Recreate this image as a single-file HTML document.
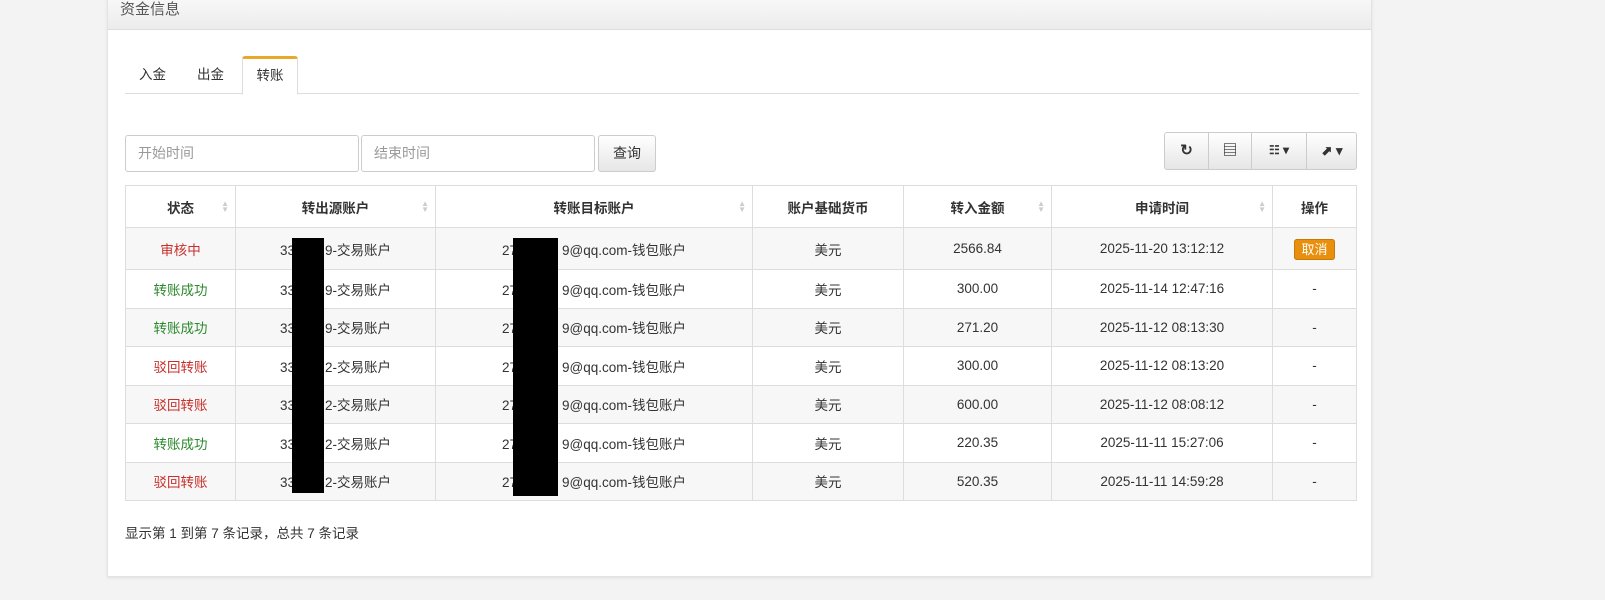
<!DOCTYPE html>
<html><head><meta charset="utf-8"><style>
*{box-sizing:border-box;margin:0;padding:0}
body{width:1605px;height:600px;overflow:hidden;background:#f3f3f3;font-family:"Liberation Sans","Noto Sans CJK SC",sans-serif;font-size:13.5px;color:#333;position:relative}
.panel{position:absolute;left:107px;top:-2px;width:1265px;height:579px;background:#fff;border:1px solid #e3e3e3;box-shadow:0 1px 3px rgba(0,0,0,.08)}
.ph{height:31px;background:linear-gradient(#f8f8f8,#ececec);border-bottom:1px solid #ddd;padding:0 12px;font-size:15px;color:#555;line-height:22px}
.tabs{position:absolute;left:17px;top:57px;width:1234px;height:38px;border-bottom:1px solid #ddd}
.tab{position:absolute;top:0;height:38px;line-height:38px;font-size:13.5px;color:#333}
.tab.act{left:117px;width:56px;background:#fff;border:1px solid #ddd;border-top:3px solid #e8a92b;border-bottom:1px solid #fff;border-radius:3px 3px 0 0;text-align:center;line-height:34px;height:39px}
.inp{position:absolute;top:136px;height:37px;border:1px solid #ccc;border-radius:3px;color:#999;font-size:14px;line-height:35px;padding-left:12px}
.btn{position:absolute;border:1px solid #ccc;border-radius:3px;background:linear-gradient(#fff,#e6e6e6);text-align:center}
table{position:absolute;left:17px;top:186px;width:1232px;border-collapse:collapse;border:1px solid #ddd;font-size:13.5px}
td,th{border:1px solid #ddd;text-align:center;height:38.5px}
th{height:42px;font-weight:bold;position:relative}
th .s{position:absolute;right:6px;top:15px;color:#ccc;font-size:8px;line-height:6px}
tr:nth-child(even) td{background:#f7f7f7}
.r{color:#c9302c}.g{color:#2d8a2d}
.cx{background:#e8900e;color:#fff;border:1px solid #c87a08;border-radius:3px;padding:2px 6px;font-size:13px}
.blk{position:absolute;background:#000}
</style></head><body>
<div class="panel">
<div class="ph">资金信息</div>
<div class="tabs">
<div class="tab" style="left:14px">入金</div>
<div class="tab" style="left:72px">出金</div>
<div class="tab act">转账</div>
</div>
<div class="inp" style="left:17px;width:234px">开始时间</div>
<div class="inp" style="left:253px;width:234px">结束时间</div>
<div class="btn" style="left:490px;top:136px;width:58px;height:37px;line-height:35px;font-size:14px">查询</div>
<div class="btn" style="left:1056px;top:133px;width:193px;height:38px;line-height:35px;font-size:15px;font-weight:bold">
<span style="position:absolute;left:0;width:43px;">&#x21bb;</span>
<span style="position:absolute;left:43px;width:43px;border-left:1px solid #ccc;height:36px">&#x25A4;</span>
<span style="position:absolute;left:86px;width:55px;border-left:1px solid #ccc;height:36px;font-size:12px">&#x2637; ▾</span>
<span style="position:absolute;left:141px;width:51px;border-left:1px solid #ccc;height:36px;font-size:13px">&#x2B08; ▾</span>
</div>
<table>
<tr><th style="width:110px">状态<span class="s">▲<br>▼</span></th><th style="width:200px">转出源账户<span class="s">▲<br>▼</span></th><th style="width:317px">转账目标账户<span class="s">▲<br>▼</span></th><th style="width:151px">账户基础货币</th><th style="width:148px">转入金额<span class="s">▲<br>▼</span></th><th style="width:221px">申请时间<span class="s">▲<br>▼</span></th><th>操作</th></tr>
<tr><td class="r" style="height:42px">审核中</td><td>33&nbsp;&nbsp;&nbsp;&nbsp;&nbsp;&nbsp;&nbsp;&nbsp;9-交易账户</td><td>272&nbsp;&nbsp;&nbsp;&nbsp;&nbsp;&nbsp;&nbsp;&nbsp;&nbsp;&nbsp;9@qq.com-钱包账户</td><td>美元</td><td>2566.84</td><td>2025-11-20 13:12:12</td><td><span class="cx">取消</span></td></tr>
<tr><td class="g">转账成功</td><td>33&nbsp;&nbsp;&nbsp;&nbsp;&nbsp;&nbsp;&nbsp;&nbsp;9-交易账户</td><td>272&nbsp;&nbsp;&nbsp;&nbsp;&nbsp;&nbsp;&nbsp;&nbsp;&nbsp;&nbsp;9@qq.com-钱包账户</td><td>美元</td><td>300.00</td><td>2025-11-14 12:47:16</td><td>-</td></tr>
<tr><td class="g">转账成功</td><td>33&nbsp;&nbsp;&nbsp;&nbsp;&nbsp;&nbsp;&nbsp;&nbsp;9-交易账户</td><td>272&nbsp;&nbsp;&nbsp;&nbsp;&nbsp;&nbsp;&nbsp;&nbsp;&nbsp;&nbsp;9@qq.com-钱包账户</td><td>美元</td><td>271.20</td><td>2025-11-12 08:13:30</td><td>-</td></tr>
<tr><td class="r">驳回转账</td><td>33&nbsp;&nbsp;&nbsp;&nbsp;&nbsp;&nbsp;&nbsp;&nbsp;2-交易账户</td><td>272&nbsp;&nbsp;&nbsp;&nbsp;&nbsp;&nbsp;&nbsp;&nbsp;&nbsp;&nbsp;9@qq.com-钱包账户</td><td>美元</td><td>300.00</td><td>2025-11-12 08:13:20</td><td>-</td></tr>
<tr><td class="r">驳回转账</td><td>33&nbsp;&nbsp;&nbsp;&nbsp;&nbsp;&nbsp;&nbsp;&nbsp;2-交易账户</td><td>272&nbsp;&nbsp;&nbsp;&nbsp;&nbsp;&nbsp;&nbsp;&nbsp;&nbsp;&nbsp;9@qq.com-钱包账户</td><td>美元</td><td>600.00</td><td>2025-11-12 08:08:12</td><td>-</td></tr>
<tr><td class="g">转账成功</td><td>33&nbsp;&nbsp;&nbsp;&nbsp;&nbsp;&nbsp;&nbsp;&nbsp;2-交易账户</td><td>272&nbsp;&nbsp;&nbsp;&nbsp;&nbsp;&nbsp;&nbsp;&nbsp;&nbsp;&nbsp;9@qq.com-钱包账户</td><td>美元</td><td>220.35</td><td>2025-11-11 15:27:06</td><td>-</td></tr>
<tr><td class="r">驳回转账</td><td>33&nbsp;&nbsp;&nbsp;&nbsp;&nbsp;&nbsp;&nbsp;&nbsp;2-交易账户</td><td>272&nbsp;&nbsp;&nbsp;&nbsp;&nbsp;&nbsp;&nbsp;&nbsp;&nbsp;&nbsp;9@qq.com-钱包账户</td><td>美元</td><td>520.35</td><td>2025-11-11 14:59:28</td><td>-</td></tr>
</table>
<div style="position:absolute;left:17px;top:523px;font-size:13.5px">显示第 1 到第 7 条记录，总共 7 条记录</div>
</div>
<div class="blk" style="left:292px;top:238px;width:32px;height:255px"></div>
<div class="blk" style="left:513px;top:238px;width:45px;height:258px"></div>
</body></html>
